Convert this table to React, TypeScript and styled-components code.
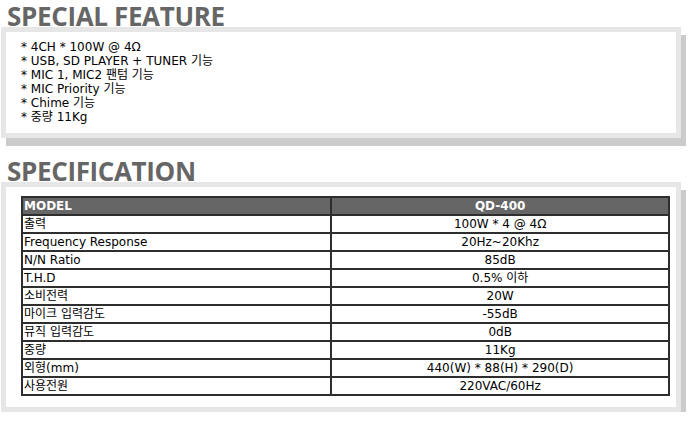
import React from 'react';
import styled, { createGlobalStyle } from 'styled-components';

const GlobalStyle = createGlobalStyle`
  body {
    margin: 0;
    background: #ffffff;
    font-family: "DejaVu Sans", "Noto Sans CJK KR", sans-serif;
  }
`;

const Page = styled.div`
  width: 694px;
  padding: 3px 0 0 1px;
  box-sizing: border-box;
`;

const Title = styled.h2`
  margin: 0 0 -2px 6px;
  height: 26px;
  line-height: 26px;
  font-family: "Open Sans", "Liberation Sans", sans-serif;
  font-size: 26px;
  font-weight: 700;
  color: #666666;
  letter-spacing: -0.35px;
`;

const Box = styled.div<{ $gap?: number }>`
  position: relative;
  width: 680px;
  box-sizing: border-box;
  border: 5px solid #e6e6e6;
  background: #ffffff;
  box-shadow: 5px 8px 0 #cbcbcb;
  margin-bottom: ${p => p.$gap ?? 0}px;
`;

const FeatureList = styled.ul`
  list-style: none;
  margin: 0;
  padding: 8px 0 9px 15px;
  font-size: 12px;
  line-height: 14px;
  color: #000000;
`;

const TableWrap = styled.div`
  padding: 9px 6px 11px 15px;
`;

const SpecTable = styled.table`
  width: 100%;
  border-collapse: separate;
  border-spacing: 0;
  border: 1px solid #2e2e2e;
  font-size: 12px;
  color: #000000;
`;

const Cell = styled.td<{ $center?: boolean }>`
  border: 1px solid #2e2e2e;
  height: 16px;
  padding: 0 1px;
  line-height: 16px;
  text-align: ${p => (p.$center ? 'center' : 'left')};
  white-space: nowrap;
`;

const HeadCell = styled(Cell)`
  background: #666666;
  color: #ffffff;
  font-weight: 700;
`;

const features = [
  '* 4CH * 100W @ 4Ω',
  '* USB, SD PLAYER + TUNER 기능',
  '* MIC 1, MIC2 팬텀 기능',
  '* MIC Priority 기능',
  '* Chime 기능',
  '* 중량 11Kg',
];

const specs: [string, string][] = [
  ['출력', '100W * 4 @ 4Ω'],
  ['Frequency Response', '20Hz~20Khz'],
  ['N/N Ratio', '85dB'],
  ['T.H.D', '0.5% 이하'],
  ['소비전력', '20W'],
  ['마이크 입력감도', '-55dB'],
  ['뮤직 입력감도', '0dB'],
  ['중량', '11Kg'],
  ['외형(mm)', '440(W) * 88(H) * 290(D)'],
  ['사용전원', '220VAC/60Hz'],
];

const App = () => (
  <Page>
    <GlobalStyle />
    <Title>SPECIAL FEATURE</Title>
    <Box $gap={20}>
      <FeatureList>
        {features.map(f => (
          <li key={f}>{f}</li>
        ))}
      </FeatureList>
    </Box>
    <Title>SPECIFICATION</Title>
    <Box>
      <TableWrap>
        <SpecTable>
          <colgroup>
            <col style={{ width: '47.8%' }} />
            <col />
          </colgroup>
          <thead>
            <tr>
              <HeadCell as="th">MODEL</HeadCell>
              <HeadCell as="th" $center>QD-400</HeadCell>
            </tr>
          </thead>
          <tbody>
            {specs.map(([k, v]) => (
              <tr key={k}>
                <Cell>{k}</Cell>
                <Cell $center>{v}</Cell>
              </tr>
            ))}
          </tbody>
        </SpecTable>
      </TableWrap>
    </Box>
  </Page>
);

export default App;
